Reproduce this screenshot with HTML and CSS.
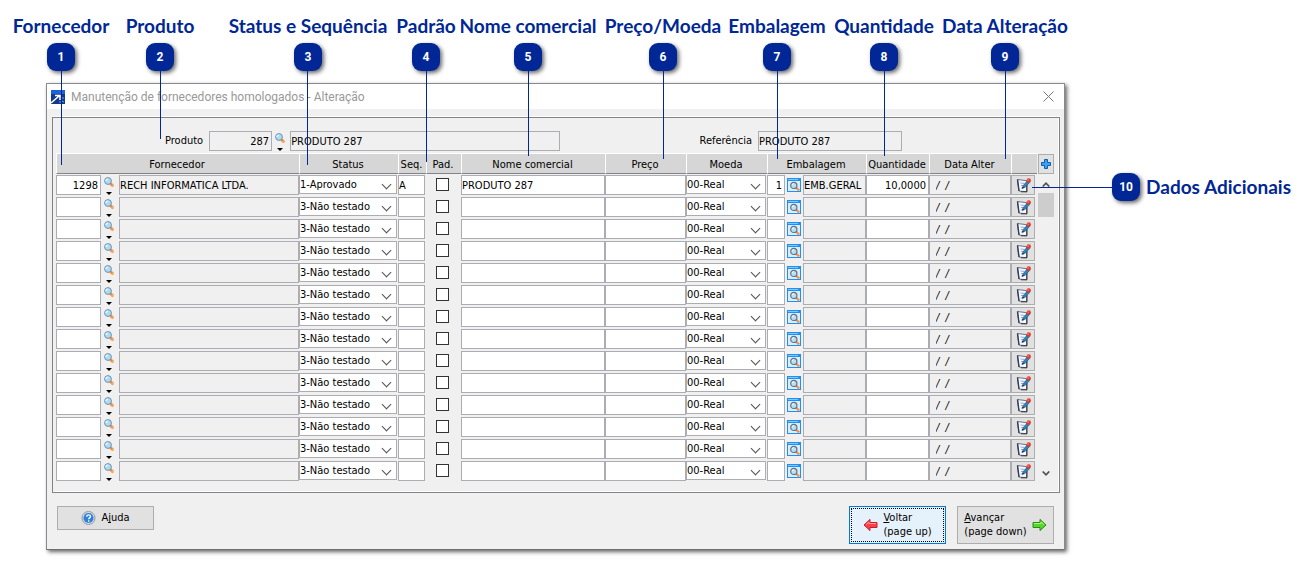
FILE: index.html
```html
<!DOCTYPE html>
<html lang="pt-BR">
<head>
<meta charset="utf-8">
<title>Manutenção de fornecedores homologados - Alteração</title>
<link rel="stylesheet" href="styles.css">
</head>
<body>
<svg class="sprite" aria-hidden="true">
  <symbol id="i-search" viewBox="0 0 10 11">
    <path d="M6.4 6.4l2 2" stroke="#f08a3c" stroke-width="2.8" stroke-linecap="round"/>
    <path d="M8 8.4h.8" stroke="#ffc27a" stroke-width="1" stroke-linecap="round"/>
    <circle cx="4" cy="4" r="3.4" fill="#a9dcf7" stroke="#7390aa"/>
    <path d="M2 4a2 2 0 0 1 2-2" stroke="#fff" stroke-width="1.2" fill="none"/>
  </symbol>
  <symbol id="i-lookup" viewBox="0 0 14 14">
    <rect x=".5" y=".5" width="13" height="13" fill="#dcecf9" stroke="#1e90f5"/>
    <path d="M0 0h14v3H0z" fill="#1e90f5"/>
    <path d="M1 1.5h10" stroke="#7ccbff"/>
    <path d="M8.8 9.3l3.4 3.2" stroke="#e8945a" stroke-width="2.4"/>
    <circle cx="6.8" cy="7.4" r="3.1" fill="#b4e0f8" stroke="#66727e" stroke-width="1.2"/>
    <path d="M5.2 7.2a1.7 1.7 0 0 1 1.6-1.6" stroke="#fff" fill="none"/>
  </symbol>
  <symbol id="i-edit" viewBox="0 0 15 15">
    <path d="M1.5 1.5l9 1.2v11l-7.5-.6z" fill="#f6f9ff" stroke="#6d7190"/>
    <path d="M1.5 1.5L3 13" stroke="#343a55" stroke-width="1.4"/>
    <path d="M4.5 5l4 .4M5 7.5h2.5M5 10h3" stroke="#8fa9d8"/>
    <path d="M5 13.8h6V7" stroke="#333" fill="none"/>
    <path d="M6.3 10.2l1-2.8 4.4-4.8 2 1.8-4.5 4.8z" fill="#2f83b8" stroke="#1d5277" stroke-width=".7"/>
    <path d="M6 10.6l.7-1.9 1.2 1z" fill="#222"/>
    <circle cx="12.7" cy="2.5" r="2.2" fill="#e03a2c"/>
    <circle cx="12.2" cy="2" r=".8" fill="#ff9384"/>
  </symbol>
</svg>

<main class="stage">
  <section class="window" aria-label="Manutenção de fornecedores homologados">
    <header class="titlebar">
      <svg class="app-icon" viewBox="0 0 14 14" aria-hidden="true">
        <path d="M0 0h14v14H0z" fill="#12398c"/>
        <path d="M0 0h14v4H0z" fill="#1d63d8"/>
        <path d="M0 13l8-7M4 5.5h5V10" stroke="#fff" stroke-width="1.6" fill="none"/>
        <path d="M9 8l2 1M11 11l2 1M8 12h2M12 7v2" stroke="#6fa2ea"/>
      </svg>
      <h1>Manutenção de fornecedores homologados - Alteração</h1>
      <button class="close" type="button" aria-label="Fechar">
        <svg viewBox="0 0 11 11"><path d="M.5.5l10 10M10.5.5l-10 10" stroke="#777" fill="none"/></svg>
      </button>
    </header>

    <div class="panel">
      <div class="filters">
        <div class="product">
          <label for="prod">Produto</label>
          <input id="prod" class="code num" value="287" readonly>
          <button class="finder" type="button" aria-label="Pesquisar produto"><svg class="lens"><use href="#i-search"/></svg><span class="drop"></span></button>
          <input class="description" value="PRODUTO 287" aria-label="Descrição do produto" readonly>
        </div>
        <div class="reference">
          <label for="ref">Referência</label>
          <input id="ref" value="PRODUTO 287" readonly>
        </div>
      </div>

      <div class="grid-area">
        <table class="grid">
          <colgroup>
            <col class="c-supplier"><col class="c-status"><col class="c-seq"><col class="c-default"><col class="c-name"><col class="c-price"><col class="c-currency"><col class="c-pack"><col class="c-qty"><col class="c-date"><col class="c-edit">
          </colgroup>
          <thead>
            <tr><th>Fornecedor</th><th>Status</th><th>Seq.</th><th>Pad.</th><th>Nome comercial</th><th>Preço</th><th>Moeda</th><th>Embalagem</th><th>Quantidade</th><th>Data Alter</th><th></th></tr>
          </thead>
          <tbody id="rows"></tbody>
        </table>
        <div class="side">
          <button class="add" type="button" aria-label="Adicionar linha">
            <svg viewBox="0 0 10 10"><path d="M3.5.5h3v3h3v3h-3v3h-3v-3h-3v-3h3z" fill="#3fa0f0" stroke="#0d5fb4"/></svg>
          </button>
          <div class="scroll">
            <svg class="arrow" viewBox="0 0 8 5"><path d="M.7 4.5L4 1.2l3.3 3.3" stroke="#505050" stroke-width="1.7" fill="none"/></svg>
            <div class="thumb"></div>
            <svg class="arrow" viewBox="0 0 8 5"><path d="M.7.5L4 3.8 7.3.5" stroke="#505050" stroke-width="1.7" fill="none"/></svg>
          </div>
        </div>
      </div>
    </div>

    <footer class="actions">
      <button class="btn help" type="button">
        <svg viewBox="0 0 15 15" aria-hidden="true"><circle cx="7.5" cy="7.5" r="7" fill="#d5dbe2" stroke="#8f979f"/><circle cx="7.5" cy="7.5" r="5.4" fill="#2f7fdc"/><path d="M5.6 6.1c0-2.6 4-2.5 4-.2 0 1.4-1.9 1.5-1.9 2.9M7.7 10v1.4" stroke="#fff" stroke-width="1.5" fill="none"/></svg>
        <span>A<u>j</u>uda</span>
      </button>
      <button class="btn back" type="button">
        <svg viewBox="0 0 15 14" aria-hidden="true"><path d="M1 7l6-5.6V4.5h7v5H7v3.1z" fill="#ff3f48" stroke="#c4202a" stroke-linejoin="round"/><path d="M3 6.7l3-2.6v1.4h7" stroke="#ff9a9e" fill="none"/></svg>
        <span><u>V</u>oltar<br>(page up)</span>
      </button>
      <button class="btn next" type="button">
        <span><u>A</u>vançar<br>(page down)</span>
        <svg viewBox="0 0 15 14" aria-hidden="true"><path d="M14 7L8 1.4V4.5H1v5h7v3.1z" fill="#55d82a" stroke="#2c8a18" stroke-linejoin="round"/><path d="M2 5.5h7V4l3 2.7" stroke="#a8f58a" fill="none"/></svg>
      </button>
    </footer>
  </section>

  <ol class="callouts">
    <li class="pin p1"><b>Fornecedor</b><i>1</i></li>
    <li class="pin p2"><b>Produto</b><i>2</i></li>
    <li class="pin p3"><b>Status e Sequência</b><i>3</i></li>
    <li class="pin p4"><b>Padrão</b><i>4</i></li>
    <li class="pin p5"><b>Nome comercial</b><i>5</i></li>
    <li class="pin p6"><b>Preço/Moeda</b><i>6</i></li>
    <li class="pin p7"><b>Embalagem</b><i>7</i></li>
    <li class="pin p8"><b>Quantidade</b><i>8</i></li>
    <li class="pin p9"><b>Data Alteração</b><i>9</i></li>
    <li class="pin p10"><i>10</i><b>Dados Adicionais</b></li>
  </ol>
</main>

<template id="row">
  <tr>
    <td><div class="supplier"><input class="code num" aria-label="Código do fornecedor"><button class="finder" type="button" aria-label="Pesquisar fornecedor"><svg class="lens"><use href="#i-search"/></svg><span class="drop"></span></button><input class="description" aria-label="Fornecedor" readonly></div></td>
    <td><select class="status" aria-label="Status"><option>3-Não testado</option><option>1-Aprovado</option></select></td>
    <td><input class="seq" aria-label="Sequência"></td>
    <td><input type="checkbox" aria-label="Padrão"></td>
    <td><input class="name" aria-label="Nome comercial"></td>
    <td><input class="num" aria-label="Preço"></td>
    <td><select aria-label="Moeda"><option>00-Real</option></select></td>
    <td><div class="pack"><input class="pack-code num" aria-label="Código da embalagem"><button class="lookup" type="button" aria-label="Pesquisar embalagem"><svg><use href="#i-lookup"/></svg></button><input class="pack-name" aria-label="Embalagem" readonly></div></td>
    <td><input class="qty num" aria-label="Quantidade"></td>
    <td><input class="date" value="/  /" aria-label="Data de alteração" readonly></td>
    <td><button class="edit" type="button" aria-label="Dados adicionais"><svg><use href="#i-edit"/></svg></button></td>
  </tr>
</template>
<script src="rows.js"></script>
</body>
</html>
```
FILE: styles.css
```css
* { box-sizing: border-box; }

body {
  margin: 0;
  background: #fff;
  color: #000;
  font: 11px/14px "DejaVu Sans Condensed", "Noto Sans", sans-serif;
}

button, input, select { font: inherit; color: inherit; margin: 0; }
button { padding: 0; border: 0; background: none; }
svg { display: block; flex: none; }
u { text-decoration-skip-ink: none; }
.sprite { display: none; }

.stage {
  position: relative;
  padding: 83px 242px 11px 46px;
}

/* Dialog */
.window {
  background: #f0f0f0;
  border: 1px solid #8a8a8e;
  border-bottom-color: #6f6f72;
  box-shadow: 2px 2px 4px rgba(0, 0, 0, .6);
  padding-bottom: 5px;
}

.titlebar {
  display: flex;
  align-items: center;
  gap: 6px;
  height: 25px;
  padding: 0 10px 0 4px;
  background: #fff;
}
.titlebar h1 {
  flex: 1;
  margin: 0;
  color: #999;
  font: 12px/16px Roboto, sans-serif;
}
.app-icon { width: 14px; height: 14px; }
.close svg { width: 11px; height: 11px; }

.panel {
  margin: 8px 4px 0 5px;
  padding: 13px 5px 10px 3px;
  border: 1px solid #838387;
  box-shadow: 0 -1px #fff, inset -1px -1px #fff;
}

input, select {
  display: block;
  width: 100%;
  height: 20px;
  padding: 0;
  border: 1px solid #abadb3;
  border-radius: 0;
  background: #fff;
  outline: 0;
}
input:read-only:not([type]) { background: #f0f0f0; }
.num { text-align: right; padding-right: 2px; }

.filters { display: flex; justify-content: space-between; height: 20px; margin-bottom: 2px; }
.product, .reference { display: flex; align-items: center; }
.product { margin-left: 109px; }
.reference { margin-right: 152px; }
.filters label { margin-right: 6px; }
.filters .code { width: 63px; }
.product .description { width: 270px; }
.reference input { width: 144px; }

.finder {
  display: flex;
  flex-direction: column;
  align-items: center;
  justify-content: space-between;
  width: 18px;
  height: 20px;
  padding: 2px 2px 0 0;
}
.lens { width: 10px; height: 11px; }
.drop { border: 3px solid transparent; border-top-color: #000; border-bottom: 0; }

/* Grid */
.grid-area { display: flex; gap: 1px; }
.grid {
  flex: 1;
  width: 100%;
  table-layout: fixed;
  border-collapse: separate;
  border-spacing: 0;
}
.c-supplier { width: 243px; }
.c-status { width: 99px; }
.c-seq { width: 28px; }
.c-default { width: 35px; }
.c-name { width: 144px; }
.c-price, .c-currency { width: 81px; }
.c-pack { width: 99px; }
.c-qty { width: 63px; }
.c-date { width: 82px; }
.c-edit { width: 26px; }

.grid th {
  height: 21px;
  padding: 3px 2px 0 0;
  border-left: 1px solid #fff;
  border-top: 1px solid #fff;
  border-bottom: 1px solid #838387;
  background: #d6d6d6;
  font-weight: normal;
  white-space: nowrap;
}
.grid td { height: 22px; padding: 1px 0; vertical-align: top; }
.supplier, .pack { display: flex; align-items: center; }
.supplier .code { width: 45px; }
.supplier .description, .pack-name { flex: 1; width: auto; min-width: 0; }
.pack-code { width: 18px; }
.lookup { margin: 0 2px; }
.lookup svg { width: 14px; height: 14px; }
.date { padding-left: 6px; font-style: italic; }
.seq { width: 27px; }

select {
  width: calc(100% - 1px);
  height: 19px;
  appearance: none;
}
td:has(> select) { position: relative; }
td:has(> select)::after {
  content: "";
  position: absolute;
  right: 8px;
  top: 7px;
  width: 6px;
  height: 6px;
  border: solid #505050;
  border-width: 0 1px 1px 0;
  transform: rotate(45deg);
  pointer-events: none;
}

input[type="checkbox"] {
  width: 13px;
  height: 13px;
  margin: 3px 0 0 10px;
  appearance: none;
  border: 1px solid #333;
}

.edit {
  display: flex;
  align-items: center;
  justify-content: center;
  width: 24px;
  height: 20px;
  border: 1px solid #adadad;
  background: #e1e1e1;
}
.edit svg { width: 15px; height: 15px; }

.side { display: flex; flex-direction: column; width: 16px; padding-top: 1px; }
.add {
  display: flex;
  align-items: center;
  justify-content: center;
  height: 20px;
  border: 1px solid #adadad;
  background: #e1e1e1;
}
.add svg { width: 10px; height: 10px; }
.scroll {
  flex: 1;
  display: flex;
  flex-direction: column;
  align-items: center;
  padding: 8px 0 6px;
}
.arrow { width: 8px; height: 5px; }
.thumb { width: 16px; height: 24px; margin: 6px 0 auto; background: #cdcdcd; }

/* Footer */
.actions {
  display: flex;
  align-items: flex-start;
  gap: 11px;
  padding: 13px 10px 0;
}
.btn {
  display: flex;
  align-items: center;
  justify-content: center;
  gap: 5px;
  width: 97px;
  height: 38px;
  border: 1px solid #adadad;
  background: #e1e1e1;
  text-align: left;
}
.btn svg { width: 15px; height: 14px; }
.btn.help { height: 24px; margin-right: auto; }
.btn.back {
  border-color: #0078d7;
  background: #e5f1fb;
  outline: 1px dotted #000;
  outline-offset: -3px;
}

/* Callouts drawn over the dialog */
.callouts { margin: 0; padding: 0; list-style: none; }
.pin {
  position: absolute;
  top: 14px;
  width: 28px;
  display: flex;
  flex-direction: column;
  align-items: center;
  color: #002795;
}
.pin b { font: bold 19px/24px Lato, sans-serif; white-space: nowrap; }
.pin i {
  display: flex;
  align-items: center;
  justify-content: center;
  flex: none;
  width: 28px;
  height: 28px;
  margin-top: 5px;
  border-radius: 9px;
  background: #002795;
  box-shadow: 2px 2px 4px rgba(0, 0, 0, .6);
  color: #fff;
  font: bold 12px/16px Roboto, sans-serif;
}
.pin::after { content: ""; width: 1px; height: 94px; background: #002795; }
.p1 { left: calc(100% * 47 / 1307); }
.p2 { left: calc(100% * 146 / 1307); }
.p3 { left: calc(100% * 294 / 1307); }
.p4 { left: calc(100% * 412 / 1307); }
.p5 { left: calc(100% * 514 / 1307); }
.p6 { left: calc(100% * 649 / 1307); }
.p7 { left: calc(100% * 763 / 1307); }
.p8 { left: calc(100% * 870 / 1307); }
.p9 { left: calc(100% * 991 / 1307); }
.p2::after { height: 68px; }
.p4::after { height: 91px; }
.p5::after, .p8::after { height: 85px; }
.p6::after, .p7::after, .p9::after { height: 88px; }
.p10 {
  left: auto;
  right: 16px;
  top: 173px;
  width: auto;
  flex-direction: row;
}
.p10 i { margin: 0 6px 0 0; }
.p10::after { order: -1; width: 80px; height: 1px; }
```
FILE: rows.js
```js
const ROW_COUNT = 14;
const records = [{
  ".supplier .code": "1298",
  ".supplier .description": "RECH INFORMATICA LTDA.",
  ".status": "1-Aprovado",
  ".seq": "A",
  ".name": "PRODUTO 287",
  ".pack-code": "1",
  ".pack-name": "EMB.GERAL",
  ".qty": "10,0000"
}];

const template = document.getElementById("row");
const body = document.getElementById("rows");
for (let i = 0; i < ROW_COUNT; i++) {
  const row = template.content.cloneNode(true);
  for (const [field, value] of Object.entries(records[i] || {})) {
    row.querySelector(field).value = value;
  }
  body.append(row);
}
```
